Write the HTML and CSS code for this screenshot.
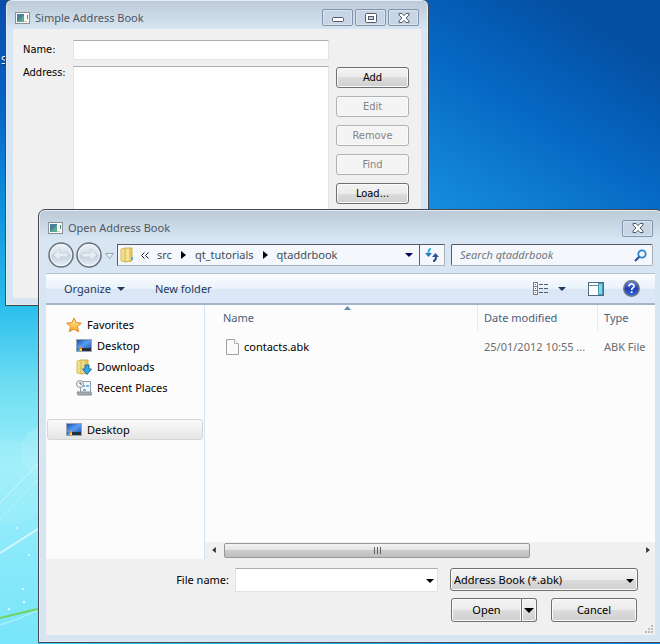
FILE: index.html
```html
<!DOCTYPE html>
<html lang="en">
<head>
<meta charset="utf-8">
<title>Open Address Book</title>
<link rel="stylesheet" href="styles.css">
</head>
<body>
<svg class="defs" aria-hidden="true">
  <defs>
    <linearGradient id="screen" x1="0" y1="0" x2="1" y2="1"><stop offset="0" stop-color="#1c4fae"/><stop offset=".5" stop-color="#5b9df0"/><stop offset="1" stop-color="#2358b4"/></linearGradient>
    <linearGradient id="folder" x1="0" y1="0" x2="1" y2="0"><stop offset="0" stop-color="#f6e7a0"/><stop offset="1" stop-color="#dfbb4e"/></linearGradient>
    <linearGradient id="star" x1="0" y1="0" x2="0" y2="1"><stop offset="0" stop-color="#fff2a0"/><stop offset="1" stop-color="#ffa51c"/></linearGradient>
    <linearGradient id="orb" x1="0" y1="0" x2="0" y2="1"><stop offset="0" stop-color="#eef3f8"/><stop offset=".48" stop-color="#d5dfe9"/><stop offset=".52" stop-color="#c3cfdb"/><stop offset="1" stop-color="#eaf3fa"/></linearGradient>
    <linearGradient id="help" x1="0" y1="0" x2="0" y2="1"><stop offset="0" stop-color="#6d8fe6"/><stop offset=".5" stop-color="#1f3fb4"/><stop offset="1" stop-color="#2f6be0"/></linearGradient>
    <symbol id="app" viewBox="0 0 15 12"><rect x=".5" y=".5" width="14" height="11" fill="#fafafa" stroke="#8a9098"/><rect x="2" y="2" width="7" height="8" fill="#4a7f9c"/><path d="M2 10l7-7v7z" fill="#5ba888"/><path d="M12.500 3v4" stroke="#4a8a68"/><path d="M9 9.500h3" stroke="#c4c8cc"/></symbol>
    <symbol id="close" viewBox="0 0 12 10"><path d="M1 .5h3L6 2.700 8 .5h3v1.500L8 5l3 3v1.500H8L6 7.300 4 9.500H1V8l3-3-3-3z" fill="#fff" stroke="#53596a"/></symbol>
    <symbol id="desktop" viewBox="0 0 16 13"><rect x=".5" y=".5" width="15" height="12" fill="#b4bdc8" stroke="#9aa5b3"/><rect x="1" y="1" width="14" height="9" fill="url(#screen)"/><path d="M6 9h9v3H6z" fill="#27303f"/><path d="M1 9h5v3H1z" fill="#2c72c0"/><path d="M3 8h2v2H3z" fill="#ef7a2a"/><path d="M5 8h1v2H5z" fill="#8cd04c"/><path d="M2 10h2v2H2z" fill="#38a9ee"/><path d="M4 10h2v2H4z" fill="#ffd438"/></symbol>
    <symbol id="down" viewBox="0 0 8 4"><path d="M0 0h8L4 4z" fill="currentColor"/></symbol>
    <symbol id="right" viewBox="0 0 5 8"><path d="M0 0l5 4-5 4z" fill="currentColor"/></symbol>
  </defs>
</svg>
<main class="desktop">
  <svg class="wallpaper" viewBox="0 0 660 644" preserveAspectRatio="none" aria-hidden="true">
    <defs>
      <linearGradient id="sky" x1="0" y1="0" x2="0" y2="1"><stop offset="0" stop-color="#0a4daa"/><stop offset=".16" stop-color="#0762c6"/><stop offset=".31" stop-color="#0c8edb"/><stop offset=".47" stop-color="#28bdec"/><stop offset=".6" stop-color="#70def3"/><stop offset=".72" stop-color="#9ceefa"/><stop offset="1" stop-color="#78e5fa"/></linearGradient>
      <linearGradient id="glow" gradientUnits="userSpaceOnUse" x1="430" y1="210" x2="560" y2="0"><stop offset="0" stop-color="#168ede"/><stop offset=".55" stop-color="#0668c4"/><stop offset="1" stop-color="#044fa2"/></linearGradient>
      <linearGradient id="strip" x1="0" y1="0" x2="1" y2="0"><stop offset="0" stop-color="#35cdf5"/><stop offset="1" stop-color="#0888ee"/></linearGradient>
    </defs>
    <rect width="660" height="644" fill="url(#sky)"/>
    <rect x="420" width="240" height="215" fill="url(#glow)"/>
    <path d="M38 642h622v2H38z" fill="url(#strip)"/>
    <circle cx="49" cy="452" r="28" fill="#b8f0fa" opacity=".35"/>
    <circle cx="10" cy="482" r="42" fill="#b8f3fb" opacity=".2"/>
    <g fill="none" stroke="#d8f8fc"><path d="M0 503L38 464" opacity=".8"/><path d="M0 519L38 479" opacity=".5"/><path d="M0 553L38 529" stroke-width="1.800"/><path d="M0 625Q20 619 38 610" opacity=".7"/><path d="M0 618Q20 613 38 609" stroke="#72d35c" stroke-width="2"/></g>
    <g fill="#dffafd"><circle cx="23" cy="589" r="1.200"/><circle cx="24" cy="602" r="1.200"/><circle cx="9" cy="609" r="1.200"/><circle cx="17" cy="528" r="1"/><circle cx="29" cy="555" r="1"/></g>
  </svg>
  <span class="shortcut">S</span>

  <section class="window book" aria-label="Simple Address Book">
    <header class="titlebar">
      <svg class="app-icon"><use href="#app"/></svg>
      <h1>Simple Address Book</h1>
      <div class="captions">
        <button class="caption" aria-label="Minimize"><svg width="12" height="10" viewBox="0 0 12 10"><rect x=".5" y="4.500" width="11" height="4" rx="1" fill="#fff" stroke="#53596a"/></svg></button>
        <button class="caption" aria-label="Maximize"><svg width="12" height="10" viewBox="0 0 12 10"><rect x=".5" y=".5" width="11" height="9" rx="1" fill="#fff" stroke="#53596a"/><rect x="3.500" y="3.500" width="5" height="3" fill="#c8d4e4" stroke="#53596a"/></svg></button>
        <button class="caption" aria-label="Close"><svg width="12" height="10"><use href="#close"/></svg></button>
      </div>
    </header>
    <form class="contact">
      <label for="name">Name:</label>
      <input class="field" id="name" type="text">
      <label class="address-label" for="address">Address:</label>
      <textarea class="field address" id="address"></textarea>
      <div class="actions">
        <button class="push" type="button">Add</button>
        <button class="push" type="button" disabled>Edit</button>
        <button class="push" type="button" disabled>Remove</button>
        <button class="push" type="button" disabled>Find</button>
        <button class="push" type="button">Load...</button>
      </div>
    </form>
  </section>

  <section class="window dialog" role="dialog" aria-label="Open Address Book">
    <header class="titlebar">
      <svg class="app-icon"><use href="#app"/></svg>
      <h2>Open Address Book</h2>
      <div class="captions"><button class="caption" aria-label="Close"><svg width="12" height="10"><use href="#close"/></svg></button></div>
    </header>

    <div class="navigation">
      <div class="history">
        <button class="orb" aria-label="Back"><svg viewBox="0 0 26 26"><circle cx="13" cy="13" r="12" fill="url(#orb)" stroke="#66717e" stroke-width="1.500"/><circle cx="13" cy="13" r="10.500" fill="none" stroke="#f4f8fb"/><path d="M5 13l7-6v4h8v4h-8v4z" fill="#e6edf4" stroke="#c6d0da"/></svg></button>
        <button class="orb" aria-label="Forward"><svg viewBox="0 0 26 26"><circle cx="13" cy="13" r="12" fill="url(#orb)" stroke="#66717e" stroke-width="1.500"/><circle cx="13" cy="13" r="10.500" fill="none" stroke="#f4f8fb"/><path d="M21 13l-7-6v4H6v4h8v4z" fill="#e6edf4" stroke="#c6d0da"/></svg></button>
        <button class="recent" aria-label="Recent pages"><svg width="9" height="6" viewBox="0 0 9 6"><path d="M.5.500h8l-4 5z" fill="#e9f1f8" stroke="#98a5b3"/></svg></button>
      </div>
      <div class="location">
        <nav class="crumbs" aria-label="Location">
          <svg width="14" height="16" viewBox="0 0 14 16"><path d="M1 2l5-1v14l-5-1z" fill="#f2df8e" stroke="#d8bd5e"/><path d="M5 1h7v13l-7 1z" fill="url(#folder)" stroke="#d3b24a"/><path d="M8 2v12" stroke="#fff3be"/><path d="M11.500 10h1.500v3h-1.500z" fill="#4fa6e0"/></svg>
          <svg class="more" width="8" height="7" viewBox="0 0 8 7"><path d="M3.500.500l-3 3 3 3M7.500.500l-3 3 3 3" fill="none" stroke="#222"/></svg>
          <a href="#src">src</a>
          <svg class="sep" width="5" height="8"><use href="#right"/></svg>
          <a href="#tutorials">qt_tutorials</a>
          <svg class="sep" width="5" height="8"><use href="#right"/></svg>
          <a href="#book">qtaddrbook</a>
        </nav>
        <button class="previous" aria-label="Previous locations"><svg width="8" height="4"><use href="#down"/></svg></button>
        <button class="refresh" aria-label="Refresh"><svg width="14" height="14" viewBox="0 0 14 14"><path d="M6 1C4 1 3.500 3 3.500 5" fill="none" stroke="#35b0e0" stroke-width="2"/><path d="M0 5h7L3.500 9z" fill="#2b76c6"/><path d="M11 8c0 3-1 5-3 5" fill="none" stroke="#2a448c" stroke-width="2"/><path d="M7 9h7l-3.500-4z" fill="#2456a8"/></svg></button>
      </div>
      <div class="search">
        <input type="search" placeholder="Search qtaddrbook" aria-label="Search qtaddrbook">
        <svg width="13" height="13" viewBox="0 0 13 13"><circle cx="8" cy="5" r="3.700" fill="#f0f8ff" stroke="#3183c8" stroke-width="1.800"/><path d="M5.300 7.700L1 12" stroke="#2c4c9c" stroke-width="2"/></svg>
      </div>
    </div>

    <div class="toolbar">
      <button class="organize">Organize <svg width="8" height="4"><use href="#down"/></svg></button>
      <button class="folder">New folder</button>
      <button class="view" aria-label="Change your view"><svg width="16" height="14" viewBox="0 0 16 14"><g fill="#fff" stroke="#75808e"><rect x=".5" y=".5" width="4" height="4"/><rect x=".5" y="4.500" width="4" height="4"/><rect x=".5" y="8.500" width="4" height="4"/></g><path d="M2 2h1v1H2z" fill="#4169a0"/><path d="M2 6h1v1H2z" fill="#c04028"/><path d="M2 10h1v1H2z" fill="#3d8a7c"/><path d="M6 2.500h4m1 0h4M6 6.500h4m1 0h4M6 10.500h4m1 0h4" stroke="#4d6078"/></svg></button>
      <button class="view-menu" aria-label="More view options"><svg width="8" height="4"><use href="#down"/></svg></button>
      <button class="preview" aria-label="Show the preview pane"><svg width="16" height="14" viewBox="0 0 16 14"><rect x=".5" y=".5" width="15" height="13" fill="#fff" stroke="#526b85"/><path d="M1 3.500h9" stroke="#71879d"/><rect x="10.500" y="1.500" width="4" height="11" fill="#7fd8ea" stroke="#4598ae"/></svg></button>
      <button class="help" aria-label="Get help"><svg width="17" height="17" viewBox="0 0 17 17"><circle cx="8.500" cy="8.500" r="7.700" fill="url(#help)" stroke="#6f7684" stroke-width="1.500"/><path d="M6 6.500C6 3 11.300 3.300 11 6.400c-.2 1.500-2.400 1.700-2.400 3.600" fill="none" stroke="#fff" stroke-width="1.700"/><rect x="7.700" y="11.300" width="1.800" height="1.800" fill="#fff"/></svg></button>
    </div>

    <div class="browser">
      <nav class="places" aria-label="Places">
        <a class="place" href="#favorites"><svg width="16" height="16" viewBox="0 0 16 16"><path d="M8 1l2.100 4.700 5.200.5-3.900 3.400 1.200 5.100L8 12l-4.600 2.700 1.200-5.100L.7 6.200l5.200-.5z" fill="url(#star)" stroke="#e08420"/></svg>Favorites</a>
        <a class="place child" href="#desktop"><svg width="16" height="13"><use href="#desktop"/></svg>Desktop</a>
        <a class="place child" href="#downloads"><svg width="16" height="16" viewBox="0 0 16 16"><path d="M1 2l5-1v14l-5-1z" fill="#f2df8e" stroke="#d8bd5e"/><path d="M5 1h7v13l-7 1z" fill="url(#folder)" stroke="#d3b24a"/><path d="M9 6h4v4h2.500L11 15.500 6.500 10H9z" fill="#38a4e4" stroke="#1d6fae"/></svg>Downloads</a>
        <a class="place child" href="#recent"><svg width="16" height="16" viewBox="0 0 16 16"><path d="M4.500 1.500h10v11h-10z" fill="#f4f7fa" stroke="#929ca6"/><path d="M7 5h2v2H7zM10 5h3v2h-3zM7 9h3v2H7z" fill="#76b5e6"/><path d="M1 12h14l.5 3H2z" fill="#a8adb3" stroke="#868c92"/><circle cx="4" cy="4" r="3.500" fill="#f2f5f7" stroke="#8b959e"/><path d="M4 2v2h2" fill="none" stroke="#59636c"/></svg>Recent Places</a>
        <a class="place selected" href="#desktop" aria-current="true"><svg width="16" height="13"><use href="#desktop"/></svg>Desktop</a>
      </nav>
      <div class="files">
        <table>
          <colgroup><col><col class="date"><col class="type"></colgroup>
          <thead><tr><th>Name<svg class="sorted" width="7" height="4" viewBox="0 0 7 4"><path d="M0 4l3.500-4L7 4z" fill="#5c8dae"/></svg></th><th>Date modified</th><th>Type</th></tr></thead>
          <tbody><tr><td><span class="file"><svg width="13" height="16" viewBox="0 0 13 16"><path d="M.5.500h8l4 4v11H.5z" fill="#fafafa" stroke="#a2a2a2"/><path d="M8.500.500v4h4" fill="#fff" stroke="#b4b4b4"/></svg>contacts.abk</span></td><td>25/01/2012 10:55 ...</td><td>ABK File</td></tr></tbody>
        </table>
        <div class="scrollbar" aria-hidden="true">
          <svg class="flip" width="4" height="6"><use href="#right"/></svg>
          <div class="track"><div class="thumb"><i></i><i></i><i></i></div></div>
          <svg width="4" height="6"><use href="#right"/></svg>
        </div>
      </div>
    </div>

    <form class="footer">
      <div class="row">
        <label for="file">File name:</label>
        <div class="combo file-name"><input class="field" id="file" type="text"><svg width="8" height="4"><use href="#down"/></svg></div>
        <div class="combo filter"><select class="push" aria-label="File type"><option>Address Book (*.abk)</option></select><svg width="8" height="4"><use href="#down"/></svg></div>
      </div>
      <div class="row buttons">
        <div class="split"><button class="push" type="button">Open</button><button class="push arrow" type="button" aria-label="Open options"><svg width="10" height="5"><use href="#down"/></svg></button></div>
        <button class="push cancel" type="button">Cancel</button>
      </div>
      <svg class="grip" width="8" height="8" viewBox="0 0 8 8" aria-hidden="true"><path d="M6 0h2v2H6zM3 3h2v2H3zM6 3h2v2H6zM0 6h2v2H0zM3 6h2v2H3zM6 6h2v2H6z" fill="#bcbcbc"/></svg>
    </form>
  </section>
</main>
</body>
</html>
```
FILE: styles.css
```css
* { box-sizing: border-box; }
body { margin: 0; font: 11px/16px "Noto Sans", "Open Sans", sans-serif; color: #000; }
button, input, select, textarea { font: inherit; color: inherit; margin: 0; padding: 0; }
button { border: 0; background: none; }
a { color: inherit; text-decoration: none; }
svg { display: block; flex: none; }
.defs { position: absolute; width: 0; height: 0; }

.desktop { position: relative; min-height: 100vh; overflow: hidden; }
.wallpaper { position: absolute; inset: 0; width: 100%; height: 100%; }
.shortcut { position: absolute; left: 1px; top: 52px; color: #fff; text-shadow: 1px 1px 2px #000; }

.window {
  position: absolute;
  display: flex;
  flex-direction: column;
  padding: 0 7px 7px;
  border: 1px solid #45494f;
  border-radius: 7px 7px 0 0;
  background: linear-gradient(#bccad8, #d8e5f2 30px, #d7e4f2);
  box-shadow: inset 0 0 0 1px #e3edf6;
}
.book { left: 5px; top: -1px; width: 424px; height: 307px; }
.dialog { left: 38px; right: -3px; top: 209px; bottom: 1px; }

.titlebar { display: flex; align-items: center; height: 29px; gap: 5px; color: #4d5763; }
.dialog .titlebar { height: 34px; }
.titlebar h1, .titlebar h2 { flex: 1; margin: 0; font-size: 11px; font-weight: 400; }
.book .titlebar { padding: 6px 2px 0; }
.dialog .titlebar { padding: 2px 2px 0; }
.app-icon { width: 15px; height: 12px; }
.captions { display: flex; gap: 2px; }
.caption {
  display: grid; place-items: center; width: 31px; height: 17px;
  border: 1px solid #8393ab; border-radius: 2px;
  background: #c8d5e4; box-shadow: inset 0 0 0 1px #d9e4ef;
}

.contact {
  flex: 1; display: grid;
  grid-template: 20px 1fr / 43px 1fr 73px;
  gap: 6px 7px; padding: 11px 12px 10px 10px;
  background: #f0f0f0;
  font: 11px/14px "DejaVu Sans Condensed", "DejaVu Sans", sans-serif;
}
.contact label { padding-top: 3px; white-space: nowrap; }
.contact .address-label { grid-column: 1; padding-top: 0; }
.field { width: 100%; min-width: 0; border: 1px solid #e2e3ea; border-top-color: #abadb3; background: #fff; outline: 0; }
.address { grid-column: 2; resize: none; }
.actions { grid-column: 3; display: flex; flex-direction: column; gap: 8px; padding-top: 1px; }
.actions .push { height: 21px; }
.push {
  border: 1px solid #707070; border-radius: 3px;
  background: linear-gradient(#f3f3f3, #ebebeb 50%, #dcdcdc 50%, #cfcfcf);
  box-shadow: inset 0 0 0 1px #fafafa;
}
.push:disabled { border-color: #adb2b5; background: #f4f4f4; color: #838383; }

.navigation { display: flex; height: 29px; align-items: flex-start; padding-right: 2px; }
.history { display: flex; align-items: center; width: 71px; gap: 2px; padding-left: 2px; }
.orb { width: 26px; height: 26px; margin-top: -2px; }
.recent { margin-left: 1px; }
.location, .search { display: flex; align-items: stretch; height: 22px; border: 1px solid #a7b1bc; border-top-color: #565c62; background: #f4f8fc; }
.location { flex: 1; border-left-color: #565c62; color: #3e4c59; }
.crumbs { flex: 1; display: flex; align-items: center; padding-left: 2px; white-space: nowrap; }
.crumbs .more { margin: 0 8px 0 7px; }
.crumbs .sep { margin: 0 9px; color: #000; }
.previous { width: 20px; display: grid; place-items: center; color: #000058; }
.refresh { width: 25px; display: grid; place-items: center; border-left: 1px solid #565c62; }
.search { width: 202px; margin-left: 6px; align-items: center; padding: 0 5px 0 8px; border-left-color: #565c62; border-radius: 2px; }
.search input { flex: 1; min-width: 0; border: 0; background: none; outline: 0; font-style: italic; }
.search input::placeholder { color: #70777e; opacity: 1; }

.toolbar {
  display: flex; align-items: center; height: 32px; padding: 0 15px 0 18px;
  border-top: 1px solid #b3c0d0; border-bottom: 2px solid #a3b4cb;
  background: linear-gradient(#fafdff, #e9f2fb 50%, #dce7f5 50%, #dde8f6);
  color: #1e395b;
}
.organize { display: flex; align-items: center; gap: 6px; margin-right: 30px; }
.view { margin-left: auto; }
.view-menu { margin-left: 9px; }
.preview { margin-left: 22px; }
.help { margin-left: 19px; }

.browser { flex: 1; display: flex; min-height: 0; background: #fcfcfc; }
.places { width: 159px; padding: 9px 1px; border-right: 1px solid #d5e3f2; }
.place { display: flex; align-items: center; gap: 5px; height: 21px; padding-left: 18px; border: 1px solid transparent; }
.child { padding-left: 28px; }
.selected { margin-top: 21px; border-color: #d5d5d5; border-radius: 3px; background: linear-gradient(#fafafa, #e5e5e5); }
.files { flex: 1; min-width: 0; display: flex; flex-direction: column; justify-content: space-between; }
table { width: 100%; table-layout: fixed; border-spacing: 0; white-space: nowrap; }
.date { width: 120px; }
.type { width: 58px; }
th, td { padding: 0 0 0 6px; text-align: left; overflow: hidden; font-weight: 400; }
th { position: relative; height: 26px; color: #4c607a; border-left: 1px solid #e1ecf7; }
th:first-child, td:first-child { padding-left: 18px; border: 0; }
td { height: 32px; color: #6d6d6d; padding-left: 7px; }
td:first-child { padding-left: 21px; }
.sorted { position: absolute; left: 51%; top: 1px; }
.file { display: flex; align-items: center; gap: 5px; color: #000; }
.scrollbar { display: flex; align-items: flex-start; height: 17px; padding: 0 5px 0 7px; gap: 8px; background: #f0f0f0; color: #333; }
.scrollbar > svg { margin-top: 5px; }
.flip { transform: scaleX(-1); }
.track { flex: 1; }
.thumb { display: flex; align-items: center; justify-content: center; gap: 2px; width: 74%; height: 15px; margin-top: 1px; border: 1px solid #979797; border-radius: 2px; background: linear-gradient(#f3f3f3, #e3e3e3 50%, #cdcdcd 50%, #bdbdbd); }
.thumb i { width: 1px; height: 7px; background: #606060; }

.footer { position: relative; height: 76px; padding: 9px 17px 0 0; background: #f0f0f0; }
.row { display: flex; justify-content: flex-end; align-items: center; height: 24px; }
.row label { margin-right: 6px; }
.combo { position: relative; height: 24px; }
.combo > svg { position: absolute; right: 4px; top: 11px; pointer-events: none; }
.file-name { width: 203px; margin-right: 12px; }
.file-name .field { height: 24px; }
.filter { width: 188px; }
.filter .push { width: 100%; height: 23px; padding-left: 3px; appearance: none; }
.buttons { gap: 14px; margin-top: 6px; padding-right: 1px; }
.split { display: flex; width: 86px; }
.buttons .push { height: 24px; }
.split .push { flex: 1; border-radius: 3px 0 0 3px; }
.split .arrow { flex: none; width: 15px; display: grid; place-items: center; border-left: 0; border-radius: 0 3px 3px 0; }
.buttons .cancel { width: 86px; }
.grip { position: absolute; right: 2px; bottom: 2px; }
```
